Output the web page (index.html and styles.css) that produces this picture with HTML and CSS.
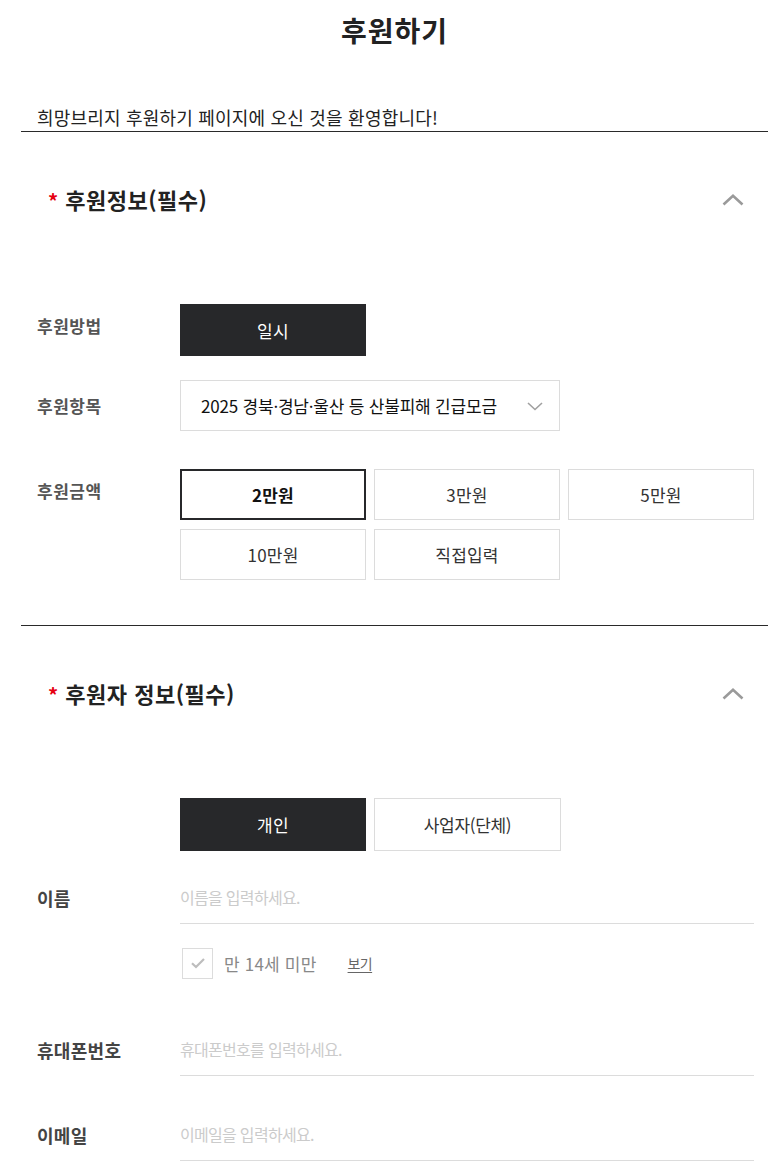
FILE: index.html
```html
<!DOCTYPE html>
<html lang="ko">
<head>
<meta charset="utf-8">
<title>후원하기</title>
<link rel="stylesheet" href="styles.css">
</head>
<body>
<div class="page">
  <h1 class="title">후원하기</h1>
  <p class="intro">희망브리지 후원하기 페이지에 오신 것을 환영합니다!</p>

  <section class="sec sec-line">
    <div class="sec-head">
      <h2 class="sec-title"><span class="req">*</span> 후원정보(필수)</h2>
      <svg class="chev-up" width="22" height="12" viewBox="0 0 22 12"><path d="M1.5 10.5 L11 1.8 L20.5 10.5" fill="none" stroke="#9a9a9a" stroke-width="2.6"/></svg>
    </div>

    <div class="row row-method">
      <div class="label">후원방법</div>
      <div class="field">
        <div class="opts opts-2">
          <button class="opt opt-dark" type="button">일시</button>
        </div>
      </div>
    </div>

    <div class="row row-item">
      <div class="label label-tall">후원항목</div>
      <div class="field">
        <div class="select">
          <span class="select-text">2025 경북·경남·울산 등 산불피해 긴급모금</span>
          <svg class="chev-down" width="16" height="9" viewBox="0 0 16 9"><path d="M1 1 L8 7.5 L15 1" fill="none" stroke="#a0a0a0" stroke-width="1.6"/></svg>
        </div>
      </div>
    </div>

    <div class="row row-amount">
      <div class="label">후원금액</div>
      <div class="field">
        <div class="amounts">
          <button class="amt amt-on" type="button">2만원</button>
          <button class="amt" type="button">3만원</button>
          <button class="amt" type="button">5만원</button>
          <button class="amt" type="button">10만원</button>
          <button class="amt" type="button">직접입력</button>
        </div>
      </div>
    </div>
  </section>

  <section class="sec">
    <div class="sec-head">
      <h2 class="sec-title"><span class="req">*</span> 후원자 정보(필수)</h2>
      <svg class="chev-up" width="22" height="12" viewBox="0 0 22 12"><path d="M1.5 10.5 L11 1.8 L20.5 10.5" fill="none" stroke="#9a9a9a" stroke-width="2.6"/></svg>
    </div>

    <div class="row row-type">
      <div class="label"></div>
      <div class="field">
        <div class="opts">
          <button class="opt opt-dark" type="button">개인</button>
          <button class="opt opt-light" type="button">사업자(단체)</button>
        </div>
      </div>
    </div>

    <div class="row row-name">
      <div class="label label-in">이름</div>
      <div class="field">
        <input class="inp" type="text" placeholder="이름을 입력하세요.">
      </div>
    </div>

    <div class="row row-check">
      <div class="label"></div>
      <div class="field check-line">
        <span class="checkbox"><svg width="16" height="12" viewBox="0 0 16 12"><path d="M2 6.2 L6 10 L14 2" fill="none" stroke="#bdbdbd" stroke-width="2.2"/></svg></span>
        <span class="check-text">만 14세 미만</span>
        <a class="check-link" href="#">보기</a>
      </div>
    </div>

    <div class="row row-phone">
      <div class="label label-in">휴대폰번호</div>
      <div class="field">
        <input class="inp" type="text" placeholder="휴대폰번호를 입력하세요.">
      </div>
    </div>

    <div class="row row-email">
      <div class="label label-in">이메일</div>
      <div class="field">
        <input class="inp" type="text" placeholder="이메일을 입력하세요.">
      </div>
    </div>
  </section>
</div>
</body>
</html>
```

FILE: styles.css
```css
* { box-sizing: border-box; }

html, body {
  margin: 0;
  padding: 0;
  background: #fff;
}

body {
  font-family: "Noto Sans CJK KR", "Noto Sans", sans-serif;
  color: #222;
}

.page {
  margin-left: 21px;
  width: 747px;
}

.title {
  margin: 0;
  padding-top: 10px;
  height: 50px;
  line-height: 40px;
  font-size: 28px;
  font-weight: 700;
  text-align: center;
  color: #222;
  letter-spacing: 1px;
}

.intro {
  margin: 55px 0 0;
  padding: 0 0 2px 16px;
  line-height: 24px;
  font-size: 18px;
  color: #222;
  border-bottom: 1px solid #2a2a2a;
  letter-spacing: 0.2px;
}

.sec-line {
  padding-bottom: 45px;
  border-bottom: 1px solid #2a2a2a;
}

.sec-head {
  display: flex;
  align-items: center;
  justify-content: space-between;
  padding: 53px 24px 0 27px;
  height: 83px;
}

.sec-title {
  margin: 0;
  font-size: 22px;
  line-height: 30px;
  font-weight: 700;
  color: #222;
  letter-spacing: 0.5px;
}

.req {
  color: #e60012;
  font-size: 20px;
}

.row {
  display: flex;
  align-items: flex-start;
  padding: 0 14px 0 16px;
}

.label {
  width: 143px;
  flex: none;
  font-size: 17px;
  font-weight: 700;
  color: #555;
  line-height: 44px;
  letter-spacing: 0.5px;
}

.label-tall { line-height: 51px; }

.label-in {
  font-size: 18px;
  color: #444;
  line-height: 44px;
  letter-spacing: 0.3px;
}

.field {
  flex: 1;
  min-width: 0;
}

.row-method { margin-top: 89px; }
.row-item { margin-top: 24px; }
.row-amount { margin-top: 38px; }
.row-type { margin-top: 89px; }
.row-name { margin-top: 25px; }
.row-check { margin-top: 24px; }
.row-phone { margin-top: 50px; }
.row-email { margin-top: 37px; }

.opts {
  display: flex;
  gap: 8px;
}

.opt {
  width: 186px;
  height: 53px;
  border: 1px solid #dcdcdc;
  background: #fff;
  font-family: inherit;
  font-size: 17px;
  color: #333;
  padding: 0;
  letter-spacing: -0.3px;
}

.opt-dark {
  background: #27282a;
  border-color: #27282a;
  color: #fff;
  letter-spacing: 0.3px;
}

.opt-light { width: 187px; }

.row-method .opt { height: 52px; }

.select {
  width: 380px;
  height: 51px;
  border: 1px solid #dcdcdc;
  display: flex;
  align-items: center;
  justify-content: space-between;
  padding: 0 16px 0 20px;
}

.select-text {
  font-size: 17px;
  color: #111;
  letter-spacing: -0.2px;
}

.chev-down { margin-top: 1px; }

.amounts {
  display: grid;
  grid-template-columns: repeat(3, 186px);
  grid-auto-rows: 51px;
  column-gap: 8px;
  row-gap: 9px;
}

.amt {
  border: 1px solid #dcdcdc;
  background: #fff;
  font-family: inherit;
  font-size: 17px;
  color: #333;
  padding: 0;
  letter-spacing: 0.2px;
}

.amt-on {
  border: 2px solid #27282a;
  font-weight: 700;
  color: #111;
}

.inp {
  display: block;
  width: 100%;
  height: 48px;
  border: 0;
  border-bottom: 1px solid #dcdcdc;
  padding: 0 0 5px 0;
  font-family: inherit;
  font-size: 16px;
  letter-spacing: -0.7px;
  color: #333;
  outline: none;
  background: transparent;
}

.inp::placeholder {
  color: #cbcbcb;
}

.check-line {
  display: flex;
  align-items: center;
  height: 30px;
  padding-left: 2px;
}

.checkbox {
  width: 31px;
  height: 31px;
  border: 1px solid #dcdcdc;
  display: flex;
  align-items: center;
  justify-content: center;
  flex: none;
}

.check-text {
  margin-left: 11px;
  font-size: 17px;
  color: #888;
  letter-spacing: 0.2px;
}

.check-link {
  margin-left: 31px;
  font-size: 14px;
  color: #666;
  text-decoration: underline;
  text-underline-offset: 3px;
  letter-spacing: -0.6px;
}
```
